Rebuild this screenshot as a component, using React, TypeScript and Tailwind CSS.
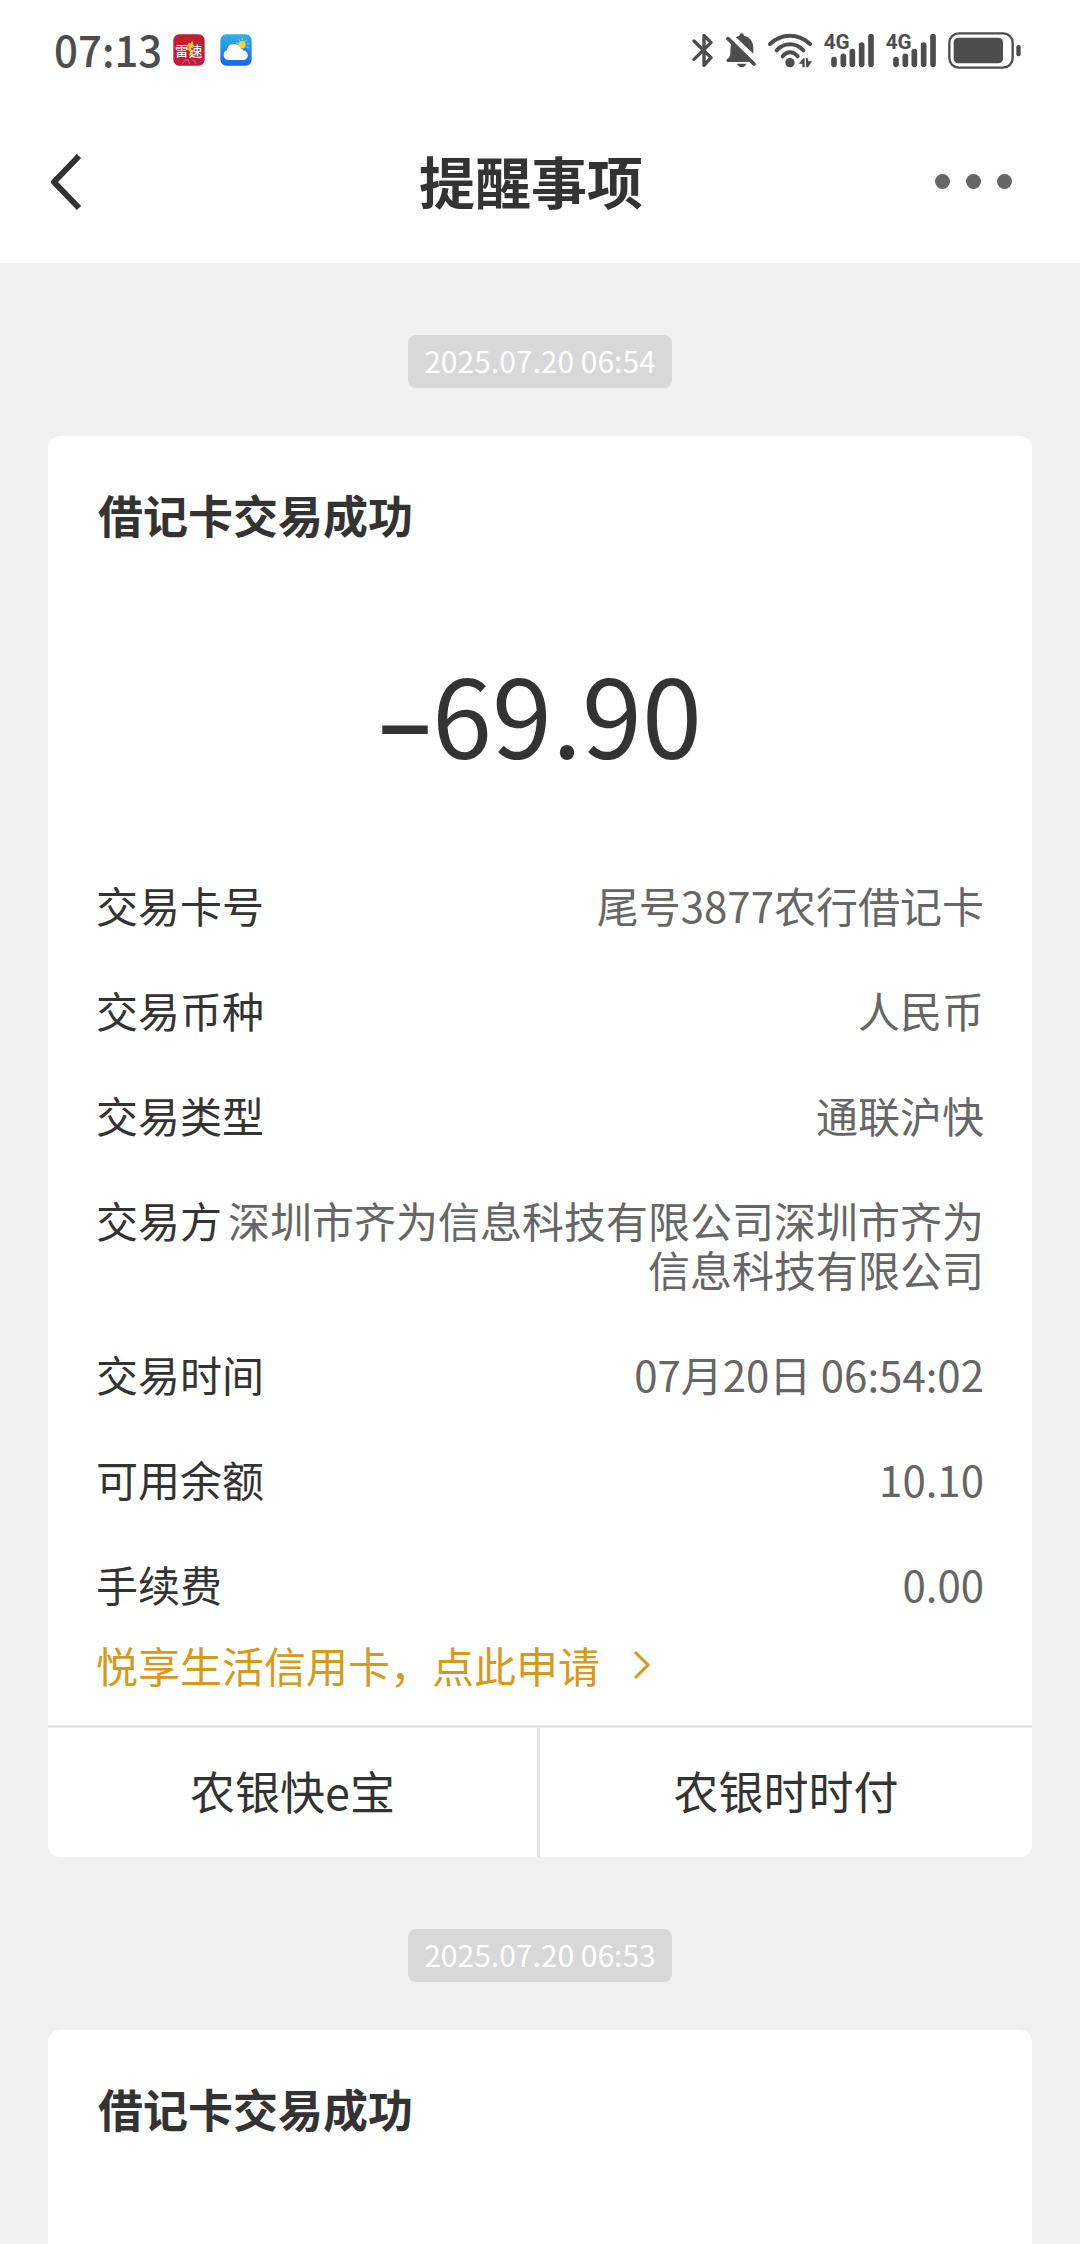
import React from "react";

const details: [string, string][] = [
  ["交易卡号", "尾号3877农行借记卡"],
  ["交易币种", "人民币"],
  ["交易类型", "通联沪快"],
  ["交易方", "深圳市齐为信息科技有限公司深圳市齐为信息科技有限公司"],
  ["交易时间", "07月20日 06:54:02"],
  ["可用余额", "10.10"],
  ["手续费", "0.00"],
];

function ScoreAppIcon() {
  return (
    <svg className="size-8" viewBox="0 0 96 96" aria-hidden="true">
      <defs>
        <linearGradient id="scoreBg" x1="0" y1="0" x2="1" y2="1">
          <stop offset="0" stopColor="#c81a2c" />
          <stop offset="1" stopColor="#bd1f3e" />
        </linearGradient>
      </defs>
      <rect x="1" y="1" width="94" height="94" rx="18" fill="url(#scoreBg)" />
      <path d="M28 90 36 78h8M50 90l-6-14M58 78l8 4 4 8" stroke="#e2697a" strokeWidth="3" fill="none" />
      <text x="6" y="65" fontSize="40" fontWeight="500" fill="#fff">雷</text>
      <text x="48" y="65" fontSize="40" fontWeight="500" fill="#fff">速</text>
      <path d="M56 22l5 2-1 7 4 7-4 2-4-3-3 9 4 7-5 13-4-2 3-11-6-6 2-12-4 5-3-3 7-9 6-1z" fill="#f9c52b" />
    </svg>
  );
}

function WeatherAppIcon() {
  return (
    <svg className="size-8" viewBox="0 0 96 96" aria-hidden="true">
      <defs>
        <linearGradient id="skyBg" x1="0" y1="0" x2="0" y2="1">
          <stop offset="0" stopColor="#2fb2e6" />
          <stop offset="1" stopColor="#1a63ee" />
        </linearGradient>
      </defs>
      <rect x="1" y="1" width="94" height="94" rx="18" fill="url(#skyBg)" />
      <circle cx="66" cy="32" r="11" fill="#f5d33d" />
      <path d="M50 26l4 2M56 17l3 4M67 14v4M79 18l-3 4M86 29l-4 1M85 41l-4-2" stroke="#d8dc5a" strokeWidth="3" strokeLinecap="round" />
      <path d="M24 78a15 15 0 0 1-3-29 21 21 0 0 1 40-7 15 15 0 0 1 10 8 14 14 0 0 1-3 28z" fill="#fff" />
    </svg>
  );
}

function BluetoothIcon() {
  return (
    <svg className="h-10 w-[22px]" viewBox="36 30 66 120" aria-label="蓝牙">
      <path d="M42 63 93 113 72 136V46L93 68 42 118" fill="none" stroke="#4d4d4d" strokeWidth="10" strokeLinecap="round" strokeLinejoin="round" />
    </svg>
  );
}

function MutedBellIcon() {
  return (
    <svg className="h-10 w-[30px]" viewBox="138 30 90 120" aria-label="静音">
      <path d="M168 52a26 26 0 0 1 10-5q1-7 7-7t7 7c18 4 26 17 28 34v20z" fill="#4d4d4d" />
      <path d="M155 66 208 117 206 126H143q-6-4-2-9c8-4 9-8 10-18q0-22 4-33z" fill="#4d4d4d" />
      <path d="M171 131h28q-4 10-14 10t-14-10z" fill="#4d4d4d" />
      <path d="M144 56l78 76" stroke="#4d4d4d" strokeWidth="11" strokeLinecap="round" />
    </svg>
  );
}

function WifiIcon() {
  return (
    <svg className="h-10 w-11" viewBox="264 30 132 120" aria-label="无线网络">
      <g fill="none" stroke="#4d4d4d" strokeWidth="12" strokeLinecap="round">
        <path d="M270 72Q296 47 330 47T390 72" />
        <path d="M290 91Q307 73 330 73T370 91" />
        <path d="M308 109Q317 97 330 97T353 109" />
      </g>
      <circle cx="330" cy="128" r="14" fill="#4d4d4d" />
      <path d="M356 131 370 115H374V142H367V131zM378 115h6v9h12L384 142h-6z" fill="#4d4d4d" />
    </svg>
  );
}

function SignalIcon() {
  return (
    <svg className="h-10 w-[50px] overflow-visible" viewBox="432 30 150 120" aria-label="4G 信号">
      <g stroke="#4d4d4d" strokeWidth="17" strokeLinecap="round">
        <path d="M462 119v14M490 109v24M517 95v38M545 75v58M573 50v83" />
      </g>
      <text x="431" y="88" fontSize="62" fontWeight="700" fill="#4d4d4d" fontFamily="Roboto, sans-serif">4G</text>
    </svg>
  );
}

function BatteryIcon() {
  return (
    <svg className="h-10 w-[73px]" viewBox="804 30 219 120" aria-label="电池">
      <rect x="808" y="40" width="190" height="103" rx="28" fill="none" stroke="#4d4d4d" strokeWidth="7" />
      <rect x="821" y="53" width="148" height="77" rx="14" fill="#4d4d4d" />
      <rect x="1009" y="75" width="13" height="34" rx="6" fill="#4d4d4d" />
    </svg>
  );
}

function StatusBar() {
  return (
    <div className="flex h-[100px] items-center justify-between bg-white pl-[54px] pr-[59px]">
      <div className="flex items-center">
        <span className="pb-[2px] text-[42px] leading-[48px] font-medium text-[#4d4d4d]">07:13</span>
        <div className="ml-[11px] flex gap-[15px]">
          <ScoreAppIcon />
          <WeatherAppIcon />
        </div>
      </div>
      <div className="flex items-center gap-3">
        <BluetoothIcon />
        <MutedBellIcon />
        <WifiIcon />
        <SignalIcon />
        <SignalIcon />
        <BatteryIcon />
      </div>
    </div>
  );
}

function Header() {
  return (
    <header className="flex h-[163px] items-center bg-white pl-12 pr-[66px]">
      <button type="button" aria-label="返回" className="flex w-[86px] items-center">
        <svg className="h-[60px] w-9" viewBox="0 0 36 60" fill="none" stroke="#333" strokeWidth="6">
          <path d="M31 4 6 30l25 26" strokeLinejoin="round" />
        </svg>
      </button>
      <h1 className="flex-1 pb-1 text-center text-[56px] leading-[64px] font-bold">提醒事项</h1>
      <button type="button" aria-label="更多" className="flex w-[86px] items-center justify-end gap-4 pr-[2px]">
        <span className="size-[15px] rounded-full bg-[#666]" />
        <span className="size-[15px] rounded-full bg-[#666]" />
        <span className="size-[15px] rounded-full bg-[#666]" />
      </button>
    </header>
  );
}

function TimePill({ time }: { time: string }) {
  return (
    <time className="mt-[72px] mb-12 self-center rounded-lg bg-[#d8d8d8] px-4 pb-[2px] text-[30px] leading-[51px] text-white">
      {time}
    </time>
  );
}

function CardTitle() {
  return <h2 className="px-[50px] pt-[52px] text-[45px] leading-[54px] font-bold">借记卡交易成功</h2>;
}

export default function App() {
  return (
    <div lang="zh-CN" className="flex min-h-screen flex-col bg-[#f0f0f0] font-['Noto_Sans_CJK_SC',sans-serif] text-[#333]">
      <StatusBar />
      <Header />
      <main className="flex flex-1 flex-col px-12">
        <TimePill time="2025.07.20 06:54" />
        <section className="overflow-hidden rounded-xl bg-white">
          <CardTitle />
          <p className="mt-[110px] text-center text-[108px] leading-[120px]">
            <span className="font-['Noto_Sans',sans-serif] leading-none">–</span>69.90
          </p>
          <dl className="mt-[108px] flex flex-col gap-14 px-12 text-[42px] leading-[49px]">
            {details.map(([label, value]) => (
              <div key={label} className="flex justify-between gap-1">
                <dt className="shrink-0">{label}</dt>
                <dd className="text-right text-[#666]">{value}</dd>
              </div>
            ))}
          </dl>
          <a href="#apply" className="mt-8 mb-9 ml-12 inline-flex items-center gap-8 text-[42px] leading-[49px] text-[#d59a1c]">
            悦享生活信用卡，点此申请
            <svg className="h-8 w-5" viewBox="0 0 20 32" fill="none" stroke="currentColor" strokeWidth="3">
              <path d="M3 3l13 13L3 29" />
            </svg>
          </a>
          <div className="grid grid-cols-2 divide-x-3 divide-[#e6e6e6] border-t-3 border-[#e6e6e6] text-[45px] leading-[54px]">
            <button type="button" className="h-[129px] pb-1">农银快e宝</button>
            <button type="button" className="h-[129px] pb-1">农银时时付</button>
          </div>
        </section>
        <TimePill time="2025.07.20 06:53" />
        <section className="flex-1 rounded-t-xl bg-white">
          <CardTitle />
        </section>
      </main>
    </div>
  );
}
